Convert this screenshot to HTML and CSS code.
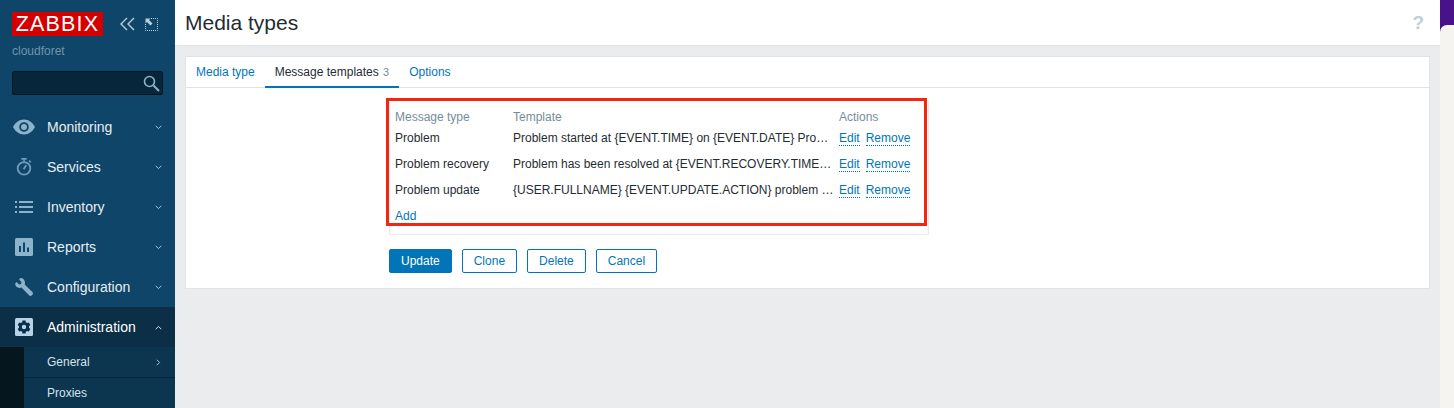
FILE: index.html
```html
<!DOCTYPE html>
<html lang="en">
<head>
  <meta charset="UTF-8">
  <meta name="viewport" content="width=device-width, initial-scale=1.0">
  <title>Media types</title>
  <link rel="stylesheet" href="styles.css">
</head>
<body>

<aside class="sidebar">
  <div class="logo-row">
    <span class="logo">ZABBIX</span>
    <svg class="collapse" width="15" height="14" viewBox="0 0 15 14"><path d="M7 1 1 7l6 6M14 1 8 7l6 6" fill="none" stroke="#b9cfdd" stroke-width="1.4"/></svg>
    <svg class="kiosk" width="13" height="13" viewBox="0 0 13 13"><path d="M6 .5h6.500V12.500H.5V6" fill="none" stroke="#b9cfdd" stroke-dasharray="1 1"/><path d="M.5.5h5L4 2l3.500 3.500-2 2L2 4 .5 5.500z" fill="#b9cfdd"/></svg>
  </div>
  <div class="server-name">cloudforet</div>
  <div class="search">
    <svg width="17" height="17" viewBox="0 0 17 17"><circle cx="6.500" cy="6.500" r="5" fill="none" stroke="#8fb2c9" stroke-width="1.600"/><path d="m10.500 10.500 5.500 5.500" stroke="#8fb2c9" stroke-width="2"/></svg>
  </div>

  <nav class="menu">
    <a class="menu-item">
      <svg class="menu-icon wide" viewBox="0 0 22 18"><path fill-rule="evenodd" d="M11 1.500c5 0 8.800 3.300 11 7.500-2.200 4.200-6 7.500-11 7.500S2.200 13.200 0 9c2.200-4.200 6-7.500 11-7.500zM11 4.200a4.800 4.800 0 1 0 0 9.600 4.800 4.800 0 0 0 0-9.600z" fill="#8cb2cc"/><circle cx="11" cy="9" r="3" fill="#8cb2cc"/></svg>
      <span>Monitoring</span>
      <svg class="chevron" width="7" height="5" viewBox="0 0 7 5"><path d="m.7.8 2.800 2.800L6.300.8" fill="none" stroke="#a9c3d5"/></svg>
    </a>
    <a class="menu-item">
      <svg class="menu-icon" viewBox="0 0 18 20"><g fill="none" stroke="#6f9dbb"><circle cx="9" cy="11.500" r="7" stroke-width="2"/><path d="M6 1h6M9 1v3M14.500 2.800l2 2" stroke-width="1.800"/><path d="M8.500 12.500l3-4.500" stroke-width="2"/></g></svg>
      <span>Services</span>
      <svg class="chevron" width="7" height="5" viewBox="0 0 7 5"><path d="m.7.8 2.800 2.800L6.300.8" fill="none" stroke="#a9c3d5"/></svg>
    </a>
    <a class="menu-item">
      <svg class="menu-icon" viewBox="0 0 18 18"><path d="M0 3h2v2H0zM0 8h2v2H0zM0 13h2v2H0zM4 3h14v2H4zM4 8h14v2H4zM4 13h14v2H4z" fill="#8cb2cc"/></svg>
      <span>Inventory</span>
      <svg class="chevron" width="7" height="5" viewBox="0 0 7 5"><path d="m.7.8 2.800 2.800L6.300.8" fill="none" stroke="#a9c3d5"/></svg>
    </a>
    <a class="menu-item">
      <svg class="menu-icon" viewBox="0 0 18 18"><rect width="18" height="18" rx="1.500" fill="#8cb2cc"/><path d="M4 8h2v6H4zM8 4.500h2V14H8zM12 9.500h2V14h-2z" fill="#0f4568"/></svg>
      <span>Reports</span>
      <svg class="chevron" width="7" height="5" viewBox="0 0 7 5"><path d="m.7.8 2.800 2.800L6.300.8" fill="none" stroke="#a9c3d5"/></svg>
    </a>
    <a class="menu-item">
      <svg class="menu-icon" viewBox="0 0 18 18"><path d="M5.500 0 4 1.500l2.500 2.500-.5 2-2 .5L1.500 4 .2 5.500C0 8 2 10 4.500 10c.8 0 1.500-.1 2-.4l7.800 8c.7.6 1.500.5 2.300 0l1-1c.5-.8.500-1.600 0-2.300L9.700 6.500c.3-.6.400-1.300.3-2C9.800 2 8 0 5.500 0z" fill="#8cb2cc"/></svg>
      <span>Configuration</span>
      <svg class="chevron" width="7" height="5" viewBox="0 0 7 5"><path d="m.7.8 2.800 2.800L6.300.8" fill="none" stroke="#a9c3d5"/></svg>
    </a>
    <a class="menu-item active">
      <svg class="menu-icon" viewBox="0 0 18 18"><rect width="18" height="18" rx="1.500" fill="#b6d3e8"/><path fill-rule="evenodd" d="M7.500 3h3l.4 1.700 1.200.7 1.700-.5 1.500 2.600-1.300 1.200v1.400l1.300 1.200-1.500 2.600-1.700-.5-1.200.7-.4 1.700h-3l-.4-1.700-1.200-.7-1.700.5-1.500-2.600 1.300-1.200V8.700L2.700 7.500l1.500-2.600 1.700.5 1.200-.7zM9 7.200a2.200 2.200 0 1 0 0 4.400 2.200 2.200 0 0 0 0-4.400z" fill="#0a2f47" transform="translate(0 -.4)"/></svg>
      <span>Administration</span>
      <svg class="chevron" width="7" height="5" viewBox="0 0 7 5"><path d="M.7 4.200 3.500 1.400l2.800 2.800" fill="none" stroke="#d5e3ec"/></svg>
    </a>
    <div class="submenu">
      <a class="sub-item">
        General
        <svg class="chevron" width="5" height="7" viewBox="0 0 5 7"><path d="m.8.7 2.800 2.800L.8 6.300" fill="none" stroke="#a9c3d5"/></svg>
      </a>
      <a class="sub-item">Proxies</a>
    </div>
  </nav>
</aside>

<div class="page">
  <header class="page-title">
    <h1>Media types</h1>
    <span class="help">?</span>
  </header>

  <main class="content">
    <section class="card">
      <div class="tabs">
        <a class="tab">Media type</a>
        <a class="tab current">Message templates <span class="count">3</span></a>
        <a class="tab">Options</a>
      </div>

      <div class="form-body">
        <div class="templates">
          <table>
            <tr>
              <th class="col-type">Message type</th>
              <th class="col-template">Template</th>
              <th>Actions</th>
            </tr>
            <tr>
              <td>Problem</td>
              <td>Problem started at {EVENT.TIME} on {EVENT.DATE} Pro…</td>
              <td><a class="link">Edit</a><a class="link">Remove</a></td>
            </tr>
            <tr>
              <td>Problem recovery</td>
              <td>Problem has been resolved at {EVENT.RECOVERY.TIME…</td>
              <td><a class="link">Edit</a><a class="link">Remove</a></td>
            </tr>
            <tr>
              <td>Problem update</td>
              <td>{USER.FULLNAME} {EVENT.UPDATE.ACTION} problem …</td>
              <td><a class="link">Edit</a><a class="link">Remove</a></td>
            </tr>
            <tr>
              <td colspan="3"><a class="link">Add</a></td>
            </tr>
          </table>
          <div class="highlight"></div>
        </div>

        <div class="buttons">
          <button class="btn primary">Update</button>
          <button class="btn">Clone</button>
          <button class="btn">Delete</button>
          <button class="btn">Cancel</button>
        </div>
      </div>
    </section>
  </main>
</div>

<div class="edge">
  <div class="edge-panel"></div>
</div>

</body>
</html>
```

FILE: styles.css
```css
html, body {
  height: 408px;
  overflow: hidden;
}
body {
  display: flex;
  margin: 0;
  font-family: "Liberation Sans", Arial, sans-serif;
  font-size: 12px;
  color: #1f2c33;
  background: #ebecee;
}

/* sidebar */
.sidebar {
  flex: 0 0 175px;
  height: 408px;
  background: #0f4568;
  overflow: hidden;
}
.logo-row {
  display: flex;
  align-items: center;
  padding: 12px 0 0 12px;
}
.logo {
  width: 91px;
  height: 24px;
  line-height: 25px;
  text-align: center;
  background: #d40000;
  color: #fff;
  font-size: 21.500px;
  letter-spacing: 1.2px;
}
.collapse {
  margin-left: 17px;
}
.kiosk {
  margin-left: 10px;
}
.server-name {
  margin: 8px 0 0 12px;
  line-height: 14px;
  color: #6f93ab;
}
.search {
  display: flex;
  align-items: center;
  justify-content: flex-end;
  box-sizing: border-box;
  height: 24px;
  margin: 13px 12px 0;
  padding-right: 2px;
  background: #07263a;
  border: 1px solid #041824;
  border-radius: 2px;
}
.menu {
  margin-top: 12px;
}
.menu-item {
  display: flex;
  align-items: center;
  height: 40px;
  padding-left: 15px;
  color: #e6eef3;
  font-size: 14px;
}
.menu-item span {
  flex: 1;
  margin-left: 14px;
}
.menu-icon {
  width: 18px;
  height: 18px;
}
.menu-icon.wide {
  width: 22px;
  margin: 0 -2px;
}
.chevron {
  margin-right: 13px;
}
.menu-item.active {
  background: #0a2f47;
  color: #fff;
}
.submenu {
  margin-left: 24px;
  background: #0c3550;
  box-shadow: -24px 0 0 #05161f;
}
.sub-item {
  display: flex;
  align-items: center;
  justify-content: space-between;
  box-sizing: border-box;
  height: 31px;
  padding-left: 23px;
  color: #d7e3ea;
  border-bottom: 1px solid #07263a;
}
.sub-item:last-child {
  border-bottom: 0;
  padding-bottom: 1px;
}
.sub-item .chevron {
  margin-right: 14px;
}

/* page */
.page {
  flex: 1;
  min-width: 0;
}
.page-title {
  display: flex;
  align-items: center;
  justify-content: space-between;
  height: 45px;
  padding: 0 16px 0 10px;
  background: #fff;
  border-bottom: 1px solid #e1e4e7;
}
.page-title h1 {
  margin: 0;
  font-size: 21px;
  font-weight: normal;
}
.help {
  color: #c3ced6;
  font-size: 19px;
  font-weight: bold;
}
.content {
  padding: 10px 10px 0;
}
.card {
  height: 231px;
  background: #fff;
  border: 1px solid #e1e4e7;
}
.tabs {
  display: flex;
  height: 30px;
  border-bottom: 1px solid #e1e4e7;
}
.tab {
  box-sizing: border-box;
  height: 31px;
  padding: 8px 10px 0;
  color: #0275b8;
}
.tab.current {
  color: #1f2c33;
  border-bottom: 2px solid #0275b8;
}
.count {
  margin-left: 1px;
  color: #768d99;
  font-size: 11px;
}
.form-body {
  padding: 13px 0 0 203px;
}

/* templates table */
.templates {
  position: relative;
  width: 538px;
  height: 133px;
  border: 1px solid #e9ecee;
  border-top: 0;
}
.templates table {
  table-layout: fixed;
  border-collapse: collapse;
  width: 100%;
}
.templates th {
  height: 16px;
  padding: 8px 6px 0 5px;
  text-align: left;
  font-weight: normal;
  color: #768d99;
}
.templates td {
  height: 26px;
  padding: 0 6px 0 5px;
  white-space: nowrap;
}
.col-type {
  width: 107px;
}
.col-template {
  width: 315px;
}
.link {
  margin-right: 6px;
  color: #0275b8;
  border-bottom: 1px dotted #0275b8;
}
.highlight {
  position: absolute;
  left: -4px;
  top: -3px;
  width: 535px;
  height: 122px;
  border: 3px solid #f5260f;
}

.buttons {
  display: flex;
  gap: 10px;
  margin-top: 14px;
}
.btn {
  box-sizing: border-box;
  height: 24px;
  padding: 0 11px;
  background: #fff;
  color: #0275b8;
  border: 1px solid #0275b8;
  border-radius: 2px;
  font-family: inherit;
  font-size: 12px;
}
.btn.primary {
  background: #0275b8;
  color: #fff;
}

/* window edge on the right */
.edge {
  display: flex;
  flex-direction: column;
  flex: 0 0 14px;
  height: 408px;
  padding-top: 25px;
  box-sizing: border-box;
  background: #4a128a;
}
.edge-panel {
  flex: 1;
  background: #f6f4f0;
  border-top-left-radius: 7px;
}
```
